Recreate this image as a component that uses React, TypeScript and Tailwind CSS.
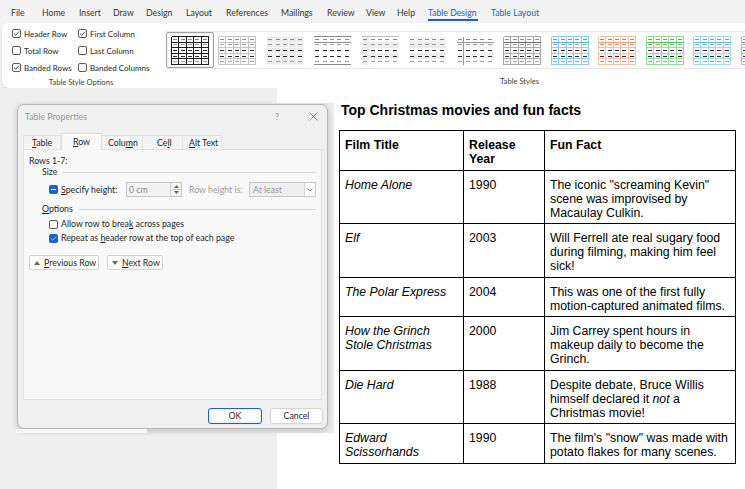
import React from "react";

type Cfg = {
  grid?: string;
  hdr?: string;
  top?: string;
  bottom?: string;
  vline1?: string;
  band?: string;
  fillAll?: string;
  firstCol?: string;
  hdrFill?: string;
};

const DASH = ["#8a8a8a", "#a0a0a0", "#2a2a2a", "#2a2a2a", "#a0a0a0"];

function Thumb({ c }: { c: Cfg }) {
  const cw = 7.4;
  const rh = 5.6;
  const ox = 0.5;
  const oy = 0.5;
  const W = cw * 5;
  const H = rh * 5;
  const els: React.ReactNode[] = [];
  if (c.fillAll) els.push(<rect key="fa" x={ox} y={oy} width={W} height={H} fill={c.fillAll} />);
  if (c.hdrFill) els.push(<rect key="hf" x={ox} y={oy} width={W} height={rh} fill={c.hdrFill} />);
  if (c.band)
    [1, 3].forEach((r) =>
      els.push(<rect key={"b" + r} x={ox} y={oy + r * rh} width={W} height={rh} fill={c.band} />)
    );
  if (c.firstCol) els.push(<rect key="fc" x={ox} y={oy} width={cw} height={H} fill={c.firstCol} />);
  if (c.grid) {
    for (let i = 0; i <= 5; i++) {
      els.push(<line key={"v" + i} x1={ox + i * cw} y1={oy} x2={ox + i * cw} y2={oy + H} stroke={c.grid} strokeWidth={1} />);
      els.push(<line key={"h" + i} x1={ox} y1={oy + i * rh} x2={ox + W} y2={oy + i * rh} stroke={c.grid} strokeWidth={1} />);
    }
  }
  if (c.top) els.push(<line key="top" x1={ox} y1={oy} x2={ox + W} y2={oy} stroke={c.top} strokeWidth={1} />);
  if (c.bottom) els.push(<line key="bot" x1={ox} y1={oy + H} x2={ox + W} y2={oy + H} stroke={c.bottom} strokeWidth={1} />);
  if (c.hdr) els.push(<line key="hdr" x1={ox} y1={oy + rh} x2={ox + W} y2={oy + rh} stroke={c.hdr} strokeWidth={1.2} />);
  if (c.vline1) els.push(<line key="v1" x1={ox + cw} y1={oy} x2={ox + cw} y2={oy + H} stroke={c.vline1} strokeWidth={1} />);
  for (let r = 0; r < 5; r++)
    for (let k = 0; k < 5; k++)
      els.push(
        <line
          key={"d" + r + k}
          x1={ox + k * cw + 1.7}
          y1={oy + r * rh + rh / 2}
          x2={ox + k * cw + 5.7}
          y2={oy + r * rh + rh / 2}
          stroke={DASH[r]}
          strokeWidth={1.1}
        />
      );
  return (
    <svg width="38" height="29" viewBox="0 0 38 29" shapeRendering="crispEdges">
      {els}
    </svg>
  );
}

const THUMBS: Cfg[] = [
  { grid: "#1c1c1c" },
  { grid: "#c6c6c6" },
  { fillAll: "#ebebeb", grid: "#f7f7f7" },
  { top: "#8c8c8c", hdr: "#8c8c8c", bottom: "#8c8c8c" },
  { band: "#ededed", firstCol: "#ededed", top: "#c0c0c0" },
  { band: "#ececec", hdrFill: "#f4f4f4" },
  { hdr: "#9a9a9a", vline1: "#9a9a9a", band: "#f3f3f3" },
  { grid: "#a9a9a9", hdr: "#6b6b6b" },
  { grid: "#8fcdf0", hdr: "#4fb0e6" },
  { grid: "#f5c4a6", hdr: "#f29a68", band: "#fdeee6" },
  { grid: "#93de98", hdr: "#4fc457", band: "#e8f8e8" },
  { grid: "#a8dbf5", hdr: "#62bdf0", band: "#e8f5fc" },
  { grid: "#e9a0e6", hdr: "#d865d2" },
];

function RibbonCb({ checked, label }: { checked?: boolean; label: string }) {
  return (
    <div className="flex items-center h-[17px] gap-[3px]">
      <div className="w-[9px] h-[9px] border border-[#5c5c5c] rounded-[2px] bg-white flex items-center justify-center">
        {checked && (
          <svg width="7" height="7" viewBox="0 0 7 7">
            <path d="M1 3.6 L2.8 5.3 L6 1.6" fill="none" stroke="#333" strokeWidth="0.9" />
          </svg>
        )}
      </div>
      <span className="whitespace-nowrap">{label}</span>
    </div>
  );
}

function MenuBar() {
  return (
    <div className="h-[23px] shrink-0 flex items-start pl-[11px] pt-[6px] text-[8.7px] leading-[13px] text-[#333]">
      <div className="w-[31px]">File</div>
      <div className="w-[37px]">Home</div>
      <div className="w-[34px]">Insert</div>
      <div className="w-[33px]">Draw</div>
      <div className="w-[40px]">Design</div>
      <div className="w-[40px]">Layout</div>
      <div className="w-[55px]">References</div>
      <div className="w-[46px]">Mailings</div>
      <div className="w-[39px]">Review</div>
      <div className="w-[31px]">View</div>
      <div className="w-[31px]">Help</div>
      <div className="w-[63px]">
        <span className="inline-block w-[50px] text-[#1f5fb5] border-b-2 border-[#1f5fb5] leading-[13px] whitespace-nowrap">
          Table Design
        </span>
      </div>
      <div className="text-[#1f5fb5]">Table Layout</div>
    </div>
  );
}

function Ribbon() {
  return (
    <div className="ml-[2px] w-[760px] h-[65px] shrink-0 bg-white rounded-[6px] shadow-[0_1px_2px_rgba(0,0,0,0.18)] flex text-[#262626]">
      <div className="w-[158px] flex flex-col text-[8px]">
        <div className="pl-[10px] pt-[2px] grid grid-cols-[66px_82px]">
          <RibbonCb checked label="Header Row" />
          <RibbonCb checked label="First Column" />
          <RibbonCb label="Total Row" />
          <RibbonCb label="Last Column" />
          <RibbonCb checked label="Banded Rows" />
          <RibbonCb label="Banded Columns" />
        </div>
        <div className="mt-auto mb-[1px] h-[12px] leading-[12px] text-center text-[7.6px] text-[#444]">
          Table Style Options
        </div>
      </div>
      <div className="w-px bg-[#e3e3e3] my-[4px]" />
      <div className="ml-[6px] flex flex-col">
        <div className="mt-[8px] h-[38px] border-y border-[#e6e6e6] flex">
          {THUMBS.map((t, i) => (
            <div
              key={i}
              className={
                i === 0
                  ? "w-[47.5px] h-full flex items-center justify-center border border-[#a0a0a0] rounded-[2px] bg-white shadow-[inset_0_0_0_1px_#f3f3f3]"
                  : "w-[47.5px] h-full flex items-center justify-center"
              }
            >
              <Thumb c={t} />
            </div>
          ))}
        </div>
        <div className="mt-auto mb-[1px] h-[12px] leading-[12px] pl-[334px] text-[7.6px] text-[#444]">Table Styles</div>
      </div>
    </div>
  );
}

function DlgCb({ state }: { state: "none" | "checked" | "mixed" }) {
  if (state === "none")
    return <div className="w-[9px] h-[9px] shrink-0 border border-[#5a5a5a] rounded-[2px] bg-[#f9f9f9]" />;
  return (
    <div className="w-[9px] h-[9px] shrink-0 rounded-[2px] bg-[#1b62c3] flex items-center justify-center">
      {state === "mixed" ? (
        <div className="w-[5px] h-px bg-white" />
      ) : (
        <svg width="7" height="7" viewBox="0 0 7 7">
          <path d="M1.2 3.7 L2.8 5.2 L5.9 1.8" fill="none" stroke="#cfe0f7" strokeWidth="0.8" />
        </svg>
      )}
    </div>
  );
}

function Dialog() {
  return (
    <div className="absolute left-[16px] top-[15px] w-[318px] h-[330px] bg-[#ececec] flex flex-col">
      <div className="ml-[1px] mt-[1px] w-[311px] h-[325px] shrink-0 bg-[#f0f0f0] border border-[#b7b7b7] rounded-[7px] shadow-[0_2px_6px_rgba(0,0,0,0.18)] flex flex-col text-[8.75px] text-[#1f1f1f] whitespace-nowrap">
        <div className="h-[23px] flex items-center pl-[7px] text-[#9a9a9a] text-[8.75px]">
          <span>Table Properties</span>
          <span className="ml-auto w-[8px]">?</span>
          <span className="ml-[26px] mr-[9px]">
            <svg width="9" height="9" viewBox="0 0 9 9">
              <path d="M0.5 0.5 L8.5 8.5 M8.5 0.5 L0.5 8.5" stroke="#8a8a8a" strokeWidth="0.9" />
            </svg>
          </span>
        </div>
        <div className="mt-[5px] h-[16px] flex items-end pl-[5px] relative z-10">
          <div className="w-[38px] h-[14px] bg-[#f4f4f4] border border-b-0 border-[#e2e2e2] pl-[8px] leading-[14px]">
            <span className="underline underline-offset-1">T</span>able
          </div>
          <div className="w-[41px] h-[17px] -mb-px bg-[#f9f9f9] border border-b-0 border-[#dcdcdc] pl-[11px] leading-[15px]">
            <span className="underline underline-offset-1">R</span>ow
          </div>
          <div className="w-[41px] h-[14px] bg-[#f4f4f4] border border-b-0 border-l-0 border-[#e2e2e2] pl-[6px] leading-[14px]">
            Colu<span className="underline underline-offset-1">m</span>n
          </div>
          <div className="w-[40px] h-[14px] bg-[#f4f4f4] border border-b-0 border-l-0 border-[#e2e2e2] pl-[14px] leading-[14px]">
            Ce<span className="underline underline-offset-1">l</span>l
          </div>
          <div className="w-[39px] h-[14px] bg-[#f4f4f4] border border-b-0 border-l-0 border-[#e2e2e2] pl-[6px] leading-[14px]">
            <span className="underline underline-offset-1">A</span>lt Text
          </div>
        </div>
        <div className="mx-[5px] h-[251px] bg-[#f9f9f9] border border-[#e0e0e0] flex flex-col">
          <div className="pl-[5px] pt-[4px] leading-[13px]">Rows 1-7:</div>
          <div className="pl-[18px] h-[10px] flex items-center">
            <span>Size</span>
            <div className="flex-1 h-px bg-[#dadada] ml-[5px] mr-[5px]" />
          </div>
          <div className="mt-[5px] h-[15px] pl-[25px] flex items-center">
            <DlgCb state="mixed" />
            <span className="ml-[3px] w-[65px]">
              <span className="underline underline-offset-1">S</span>pecify height:
            </span>
            <div className="w-[56px] h-[15px] border border-[#c6c6c6] bg-[#f3f3f3] flex">
              <span className="flex-1 pl-[2px] leading-[13px] text-[#8a8a8a]">0 cm</span>
              <div className="w-[11px] border-l border-[#d0d0d0] flex flex-col items-center justify-center gap-[1px]">
                <svg width="5" height="3" viewBox="0 0 5 3">
                  <path d="M0 3 L2.5 0 L5 3 Z" fill="#6a6a6a" />
                </svg>
                <div className="w-[9px] h-px bg-[#d0d0d0]" />
                <svg width="5" height="3" viewBox="0 0 5 3">
                  <path d="M0 0 L2.5 3 L5 0 Z" fill="#6a6a6a" />
                </svg>
              </div>
            </div>
            <span className="ml-[7px] w-[60px] text-[#9a9a9a]">Row height is:</span>
            <div className="w-[67px] h-[15px] border border-[#c8c8c8] bg-[#efefef] flex">
              <span className="flex-1 pl-[3px] leading-[13px] text-[#9a9a9a]">At least</span>
              <div className="w-[11px] bg-white border-l border-[#d2d2d2] flex items-center justify-center">
                <svg width="6" height="4" viewBox="0 0 6 4">
                  <path d="M0.5 0.5 L3 3 L5.5 0.5" fill="none" stroke="#777" strokeWidth="0.8" />
                </svg>
              </div>
            </div>
          </div>
          <div className="mt-[7px] pl-[18px] h-[10px] flex items-center">
            <span>
              <span className="underline underline-offset-1">O</span>ptions
            </span>
            <div className="flex-1 h-px bg-[#dadada] ml-[5px] mr-[5px]" />
          </div>
          <div className="mt-[3px] h-[14px] pl-[25px] flex items-center gap-[3px]">
            <DlgCb state="none" />
            <span>
              Allow row to brea<span className="underline underline-offset-1">k</span> across pages
            </span>
          </div>
          <div className="h-[14px] pl-[25px] flex items-center gap-[3px]">
            <DlgCb state="checked" />
            <span>
              Repeat as <span className="underline underline-offset-1">h</span>eader row at the top of each page
            </span>
          </div>
          <div className="mt-[10px] pl-[5px] flex gap-[8px]">
            <div className="w-[70px] h-[15px] bg-white border border-[#d2d2d2] rounded-[2px] flex items-center pl-[4px] gap-[4px]">
              <svg width="6" height="4" viewBox="0 0 6 4">
                <path d="M0 4 L3 0 L6 4 Z" fill="#666" />
              </svg>
              <span>
                <span className="underline underline-offset-1">P</span>revious Row
              </span>
            </div>
            <div className="w-[56px] h-[15px] bg-white border border-[#d2d2d2] rounded-[2px] flex items-center pl-[4px] gap-[4px]">
              <svg width="6" height="4" viewBox="0 0 6 4">
                <path d="M0 0 L3 4 L6 0 Z" fill="#666" />
              </svg>
              <span>
                <span className="underline underline-offset-1">N</span>ext Row
              </span>
            </div>
          </div>
        </div>
        <div className="mt-[8px] flex justify-end pr-[4px] gap-[8px]">
          <div className="w-[54px] h-[16px] bg-white border border-[#1b62c3] rounded-[3px] shadow-[inset_0_0_0_1px_#e3ecf8] flex items-center justify-center">
            OK
          </div>
          <div className="w-[53px] h-[16px] bg-white border border-[#d4d4d4] rounded-[3px] flex items-center justify-center">
            Cancel
          </div>
        </div>
      </div>
      <div className="h-[4px] w-[131px] bg-[#f7f7f7]" />
    </div>
  );
}

type Row = { t: React.ReactNode[]; y: string; f: React.ReactNode[] };

const ROWS: Row[] = [
  { t: ["Home Alone"], y: "1990", f: ["The iconic \"screaming Kevin\"", "scene was improvised by", "Macaulay Culkin."] },
  { t: ["Elf"], y: "2003", f: ["Will Ferrell ate real sugary food", "during filming, making him feel", "sick!"] },
  { t: ["The Polar Express"], y: "2004", f: ["This was one of the first fully", "motion-captured animated films."] },
  { t: ["How the Grinch", "Stole Christmas"], y: "2000", f: ["Jim Carrey spent hours in", "makeup daily to become the", "Grinch."] },
  {
    t: ["Die Hard"],
    y: "1988",
    f: [
      "Despite debate, Bruce Willis",
      <>
        himself declared it <i>not</i> a
      </>,
      "Christmas movie!",
    ],
  },
  { t: ["Edward", "Scissorhands"], y: "1990", f: ["The film's \"snow\" was made with", "potato flakes for many scenes."] },
];

function Lines({ items }: { items: React.ReactNode[] }) {
  return (
    <>
      {items.map((l, i) => (
        <div key={i} className="whitespace-nowrap">
          {l}
        </div>
      ))}
    </>
  );
}

function DocTable() {
  return (
    <table className="border-collapse text-[12.3px] leading-[14px] text-black font-['Liberation_Sans',Arial,sans-serif]">
      <tbody>
        <tr>
          <td className="w-[124px] border border-black align-top pl-[5px] pr-[6px] pt-[7px] pb-[3.5px] font-bold">Film Title</td>
          <td className="w-[81px] border border-black align-top pl-[5px] pr-[6px] pt-[7px] pb-[3.5px] font-bold">
            <Lines items={["Release", "Year"]} />
          </td>
          <td className="w-[191px] border border-black align-top pl-[5px] pr-[6px] pt-[7px] pb-[3.5px] font-bold">Fun Fact</td>
        </tr>
        {ROWS.map((r, i) => (
          <tr key={i}>
            <td className="border border-black align-top pl-[5px] pr-[6px] pt-[7px] pb-[3.5px] italic">
              <Lines items={r.t} />
            </td>
            <td className="border border-black align-top pl-[5px] pr-[6px] pt-[7px] pb-[3.5px]">{r.y}</td>
            <td className="border border-black align-top pl-[5px] pr-[6px] pt-[7px] pb-[3.5px]">
              <Lines items={r.f} />
            </td>
          </tr>
        ))}
      </tbody>
    </table>
  );
}

function DocArea() {
  return (
    <div className="relative flex-1 flex">
      <div className="w-[277px] bg-[#efefef]" />
      <div className="flex-1 bg-white pl-[62px] pt-[14px]">
        <div className="font-['Liberation_Sans',Arial,sans-serif] font-bold text-[14px] leading-[17px] text-black pl-[2px] mb-[11px]">
          Top Christmas movies and fun facts
        </div>
        <DocTable />
      </div>
      <Dialog />
    </div>
  );
}

export default function App() {
  return (
    <div className="w-[745px] h-[489px] overflow-hidden bg-[#f3f3f3] flex flex-col font-['Lato',sans-serif] text-[#262626]">
      <MenuBar />
      <Ribbon />
      <DocArea />
    </div>
  );
}
